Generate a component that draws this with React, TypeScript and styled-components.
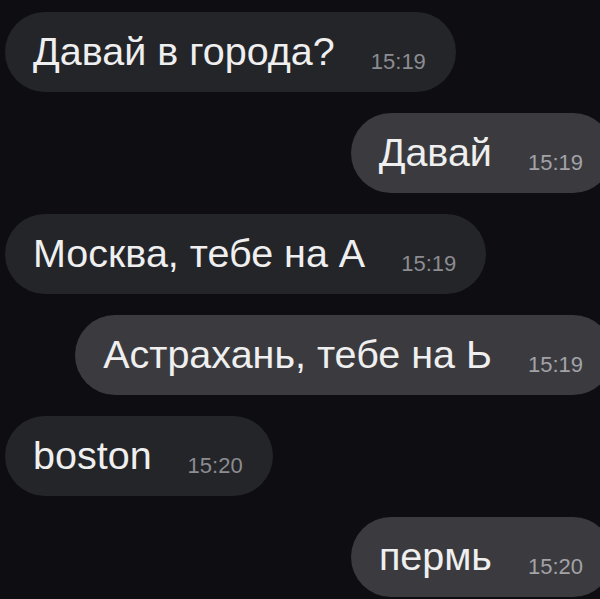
import React from "react";
import styled, { createGlobalStyle } from "styled-components";

const GlobalStyle = createGlobalStyle`
  html, body {
    margin: 0;
    padding: 0;
    background: #0e0e12;
    overflow: hidden;
  }
`;

const StyledChat = styled.div`
  display: flex;
  flex-direction: column;
  gap: 21px;
  padding: 12px 0 0 5px;
  font-family: "Liberation Sans", Arial, sans-serif;
`;

const StyledBubble = styled.div<{ $out?: boolean }>`
  display: flex;
  align-items: center;
  align-self: ${(p) => (p.$out ? "flex-end" : "flex-start")};
  height: 80px;
  box-sizing: border-box;
  padding: 0 30px 0 28px;
  margin-right: ${(p) => (p.$out ? "-13px" : "0")};
  border-radius: 40px;
  background: ${(p) => (p.$out ? "#3b3b3f" : "#242529")};
`;

const StyledText = styled.span`
  font-size: 39.5px;
  line-height: 1;
  color: #efeff0;
  white-space: nowrap;
`;

const StyledTime = styled.span<{ $out?: boolean }>`
  margin: 20px 0 0 36px;
  font-size: 22px;
  line-height: 1;
  color: ${(p) => (p.$out ? "#a2a2a7" : "#8c8c91")};
`;

const messages = [
  { text: "Давай в города?", time: "15:19", out: false },
  { text: "Давай", time: "15:19", out: true },
  { text: "Москва, тебе на А", time: "15:19", out: false },
  { text: "Астрахань, тебе на Ь", time: "15:19", out: true },
  { text: "boston", time: "15:20", out: false },
  { text: "пермь", time: "15:20", out: true },
];

export default function App() {
  return (
    <>
      <GlobalStyle />
      <StyledChat>
        {messages.map((m, i) => (
          <StyledBubble key={i} $out={m.out}>
            <StyledText>{m.text}</StyledText>
            <StyledTime $out={m.out}>{m.time}</StyledTime>
          </StyledBubble>
        ))}
      </StyledChat>
    </>
  );
}
